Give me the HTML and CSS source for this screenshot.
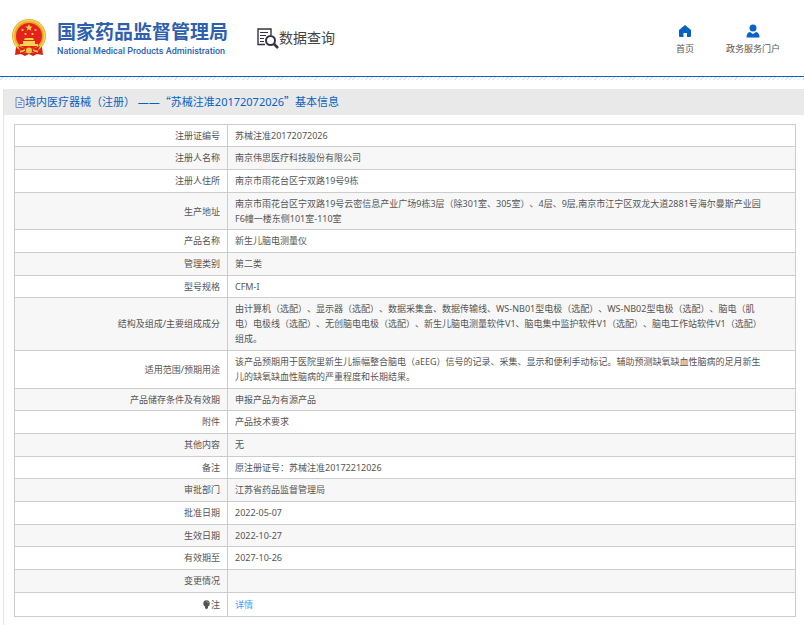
FILE: index.html
```html
<!DOCTYPE html>
<html lang="zh-CN">
<head>
    <meta charset="UTF-8">
    <meta name="viewport" content="width=device-width, initial-scale=1.0">
    <title>国家药品监督管理局 数据查询</title>
    <link rel="stylesheet" href="styles.css">
</head>
<body>
    <header class="header">
        <a class="logo" href="#">
            <svg class="emblem" viewBox="0 0 36 38" aria-hidden="true">
                <path d="M5 28 L4 36 L10 35 L14 37 L18 35 L22 37 L26 35 L32 36 L31 28 Z" fill="#d8201c"/>
                <circle cx="18" cy="17" r="17" fill="#e9a92c"/>
                <circle cx="18" cy="17" r="15.5" fill="none" stroke="#f8cf55" stroke-width="1.5"/>
                <circle cx="18" cy="17" r="13" fill="#e3231b"/>
                <path d="M18 5 l1 2.4 2.6.1 -2 1.7.7 2.5 -2.3-1.4 -2.3 1.4 .7-2.5 -2-1.7 2.6-.1z" fill="#f9d649"/>
                <g fill="#f9d649">
                    <circle cx="11.5" cy="11" r="1.1"/>
                    <circle cx="24.5" cy="11" r="1.1"/>
                    <circle cx="14.5" cy="15" r="1.1"/>
                    <circle cx="21.5" cy="15" r="1.1"/>
                    <path d="M13 21 l1-2h8l1 2zM12 22h12v3h3v2H9v-2h3z"/>
                </g>
                <path d="M7 27 Q18 33 29 27 L27 31 Q18 36 9 31 Z" fill="#d8201c"/>
                <circle cx="18" cy="31.5" r="3" fill="#f5c544"/>
                <path d="M9 33 L14 31 M27 33 L22 31" stroke="#f5c544" stroke-width="1.5"/>
            </svg>
            <span class="logo-text">
                <strong class="logo-cn">国家药品监督管理局</strong>
                <span class="logo-en">National Medical Products Administration</span>
            </span>
        </a>
        <div class="search-title">
            <svg class="search-icon" viewBox="0 0 22 21" fill="none" stroke="#33333f" aria-hidden="true">
                <path d="M8 16.5H1V1h13v6" stroke-width="1.4"/>
                <path d="M3 4.5h8M3 7.5h6M3 10.5h4M3 13.5h4" stroke-width="1.2"/>
                <circle cx="13.5" cy="12.5" r="4.5" stroke-width="2"/>
                <path d="M17 16l4 4" stroke-width="2.5"/>
            </svg>
            <span>数据查询</span>
        </div>
        <nav class="nav">
            <a href="#">
                <svg class="nav-icon" viewBox="0 0 14 14" fill="#0862c4" aria-hidden="true">
                    <path d="M7 1 L13 6 Q13.5 6.5 13 7 V12 Q13 13 12 13 H9 V9 H5.5 V13 H2 Q1 13 1 12 V7 Q.5 6.5 1 6 Z"/>
                </svg>
                首页
            </a>
            <a href="#">
                <svg class="nav-icon" viewBox="0 0 14 14" fill="#0862c4" aria-hidden="true">
                    <circle cx="7" cy="4" r="3.5"/>
                    <path d="M0.5 13.5 Q.5 8.5 4 8 L7 10 L10 8 Q13.5 8.5 13.5 13.5 Z"/>
                </svg>
                政务服务门户
            </a>
        </nav>
    </header>
    <div class="stripe"></div>

    <main class="content">
        <h1 class="title">
            <svg class="doc-icon" viewBox="0 0 10 11" fill="none" stroke="#6f8ed0" aria-hidden="true">
                <path d="M1 .5h5l3 3v7H1zM6 .5v3h3M3 5.5h4M3 7.5h4"/>
            </svg>
            <span>境内医疗器械（注册） ——<span class="quote">“</span>苏械注准20172072026<span class="quote">”</span>基本信息</span>
        </h1>
        <table class="info">
            <tbody>
                <tr><th scope="row">注册证编号</th><td>苏械注准20172072026</td></tr>
                <tr><th scope="row">注册人名称</th><td>南京伟思医疗科技股份有限公司</td></tr>
                <tr><th scope="row">注册人住所</th><td>南京市雨花台区宁双路19号9栋</td></tr>
                <tr><th scope="row">生产地址</th><td>南京市雨花台区宁双路19号云密信息产业广场9栋3层（除301室、305室）、4层、9层,南京市江宁区双龙大道2881号海尔曼斯产业园F6幢一楼东侧101室-110室</td></tr>
                <tr><th scope="row">产品名称</th><td>新生儿脑电测量仪</td></tr>
                <tr><th scope="row">管理类别</th><td>第二类</td></tr>
                <tr><th scope="row">型号规格</th><td>CFM-I</td></tr>
                <tr><th scope="row">结构及组成/主要组成成分</th><td>由计算机（选配）、显示器（选配）、数据采集盒、数据传输线、WS-NB01型电极（选配）、WS-NB02型电极（选配）、脑电（肌电）电极线（选配）、无创脑电电极（选配）、新生儿脑电测量软件V1、脑电集中监护软件V1（选配）、脑电工作站软件V1（选配）组成。</td></tr>
                <tr><th scope="row">适用范围/预期用途</th><td>该产品预期用于医院里新生儿振幅整合脑电（aEEG）信号的记录、采集、显示和便利手动标记。辅助预测缺氧缺血性脑病的足月新生儿的缺氧缺血性脑病的严重程度和长期结果。</td></tr>
                <tr><th scope="row">产品储存条件及有效期</th><td>申报产品为有源产品</td></tr>
                <tr><th scope="row">附件</th><td>产品技术要求</td></tr>
                <tr><th scope="row">其他内容</th><td>无</td></tr>
                <tr><th scope="row">备注</th><td>原注册证号：苏械注准20172212026</td></tr>
                <tr><th scope="row">审批部门</th><td>江苏省药品监督管理局</td></tr>
                <tr><th scope="row">批准日期</th><td>2022-05-07</td></tr>
                <tr><th scope="row">生效日期</th><td>2022-10-27</td></tr>
                <tr><th scope="row">有效期至</th><td>2027-10-26</td></tr>
                <tr><th scope="row">变更情况</th><td></td></tr>
                <tr>
                    <th scope="row">
                        <svg class="note-icon" viewBox="0 0 7 9" fill="#555" aria-hidden="true">
                            <circle cx="3.5" cy="3.5" r="3.2"/>
                            <path d="M2 6h3v2l-1 1h-1l-1-1z"/>
                            <path d="M4 1.5l1.5 1.5" stroke="#ccc" stroke-width=".8"/>
                        </svg>注
                    </th>
                    <td><a class="detail" href="#">详情</a></td>
                </tr>
            </tbody>
        </table>
    </main>
</body>
</html>
```
FILE: styles.css
```css
* {
    box-sizing: border-box;
}
body {
    margin: 0;
    background: #fff;
    color: #555;
    font-family: "Noto Sans", "Noto Sans CJK SC", sans-serif;
    font-size: 9px;
    line-height: 15px;
    text-spacing-trim: space-all;
}
a {
    color: inherit;
    text-decoration: none;
}
svg {
    flex: none;
}

/* header */
.header {
    display: flex;
    align-items: center;
    height: 77px;
    padding: 0 24px 0 11px;
    border-bottom: 1px solid #0862c4;
}
.logo {
    display: flex;
    align-items: center;
    gap: 10px;
    color: #2f5fae;
}
.emblem {
    width: 36px;
    height: 38px;
}
.logo-text {
    display: flex;
    flex-direction: column;
}
.logo-cn {
    font-size: 19px;
    line-height: 26px;
}
.logo-en {
    font-family: Roboto, sans-serif;
    font-size: 9px;
    font-weight: 500;
    line-height: 12px;
}
.search-title {
    display: flex;
    align-items: center;
    margin-left: 29px;
    color: #444;
    font-size: 14px;
    line-height: 20px;
}
.search-icon {
    width: 22px;
    height: 21px;
}
.nav {
    display: flex;
    gap: 32px;
    margin-left: auto;
    padding-top: 4px;
}
.nav a {
    display: flex;
    flex-direction: column;
    align-items: center;
    gap: 3px;
}
.nav-icon {
    width: 14px;
    height: 14px;
}
.stripe {
    height: 3px;
    background: repeating-linear-gradient(135deg, #fff 0 2px, #e4e4e4 2px 3px);
}

/* detail */
.content {
    margin: 9px 0 0 3px;
    padding-bottom: 8px;
    border-left: 1px solid #e4e4e4;
}
.title {
    display: flex;
    align-items: center;
    margin: 0 0 9px;
    padding: 0 11px;
    background: #e9e9e9;
    color: #0862c4;
    font-size: 11px;
    font-weight: 400;
    line-height: 26px;
}
.doc-icon {
    width: 10px;
    height: 11px;
}
.quote {
    font-family: "Noto Sans CJK SC", sans-serif;
    line-height: 1;
}
.info {
    width: calc(100% - 18px);
    margin-left: 10px;
    border: 1px solid #ccc;
    border-collapse: collapse;
}
.info th,
.info td {
    height: 23px;
    padding: 3px 7px 4px;
    border: 1px solid #ccc;
    font-weight: 400;
}
.info th {
    width: 213px;
    text-align: right;
}
.info td {
    padding-right: 32px;
}
.info tr:nth-child(even) {
    background: #f7f7f7;
}
.info tr:nth-child(3n+1) th,
.info tr:nth-child(3n+1) td {
    height: 22px;
    padding-bottom: 3px;
}
.info tr:last-child th,
.info tr:last-child td {
    height: 24px;
}
.note-icon {
    width: 7px;
    height: 9px;
    margin-right: 1px;
    vertical-align: -1px;
}
.detail {
    color: #409eff;
}
```
